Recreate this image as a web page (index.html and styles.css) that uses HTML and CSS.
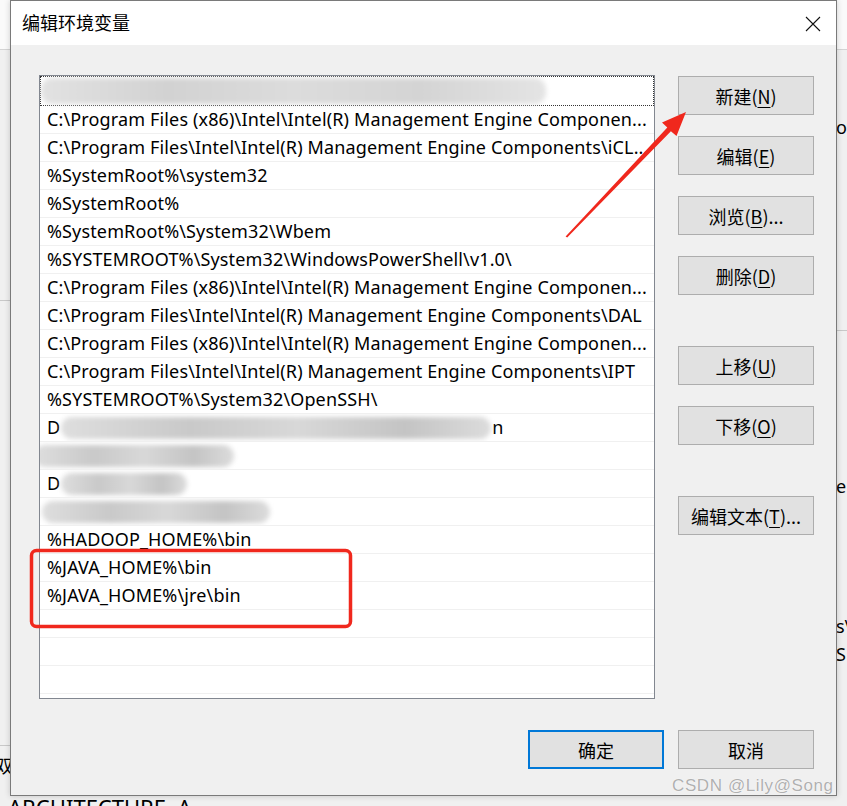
FILE: index.html
```html
<!DOCTYPE html>
<html lang="zh-CN">
<head>
<meta charset="utf-8">
<title>编辑环境变量</title>
<link rel="stylesheet" href="styles.css">
</head>
<body>
<div class="desktop">
  <div class="backwin">
    <div class="bw-top"></div>
    <span class="bw-text bw-of">of</span>
    <span class="bw-text bw-er">er</span>
    <span class="bw-text bw-s">s\</span>
    <span class="bw-text bw-se">SE</span>
    <span class="bw-text bw-qu">双</span>
    <span class="bw-text bw-arch">ARCHITECTURE&nbsp;&nbsp;A</span>
    <div class="bw-line bw-l1"></div>
    <div class="bw-line bw-l2"></div>
    <div class="bw-line bw-l3"></div>
  </div>

  <div class="dialog">
    <div class="titlebar">
      <span class="title">编辑环境变量</span>
      <svg class="close" width="16" height="16" viewBox="0 0 16 16"><path d="M1 1 L15 15 M15 1 L1 15" stroke="#111" stroke-width="1.1" fill="none"/></svg>
    </div>
    <div class="content">
      <div class="main">
        <div class="list">
          <div class="row focus"><span class="blur b1"></span></div>
          <div class="row">C:\Program Files (x86)\Intel\Intel(R) Management Engine Componen...</div>
          <div class="row">C:\Program Files\Intel\Intel(R) Management Engine Components\iCL...</div>
          <div class="row">%SystemRoot%\system32</div>
          <div class="row">%SystemRoot%</div>
          <div class="row">%SystemRoot%\System32\Wbem</div>
          <div class="row">%SYSTEMROOT%\System32\WindowsPowerShell\v1.0\</div>
          <div class="row">C:\Program Files (x86)\Intel\Intel(R) Management Engine Componen...</div>
          <div class="row">C:\Program Files\Intel\Intel(R) Management Engine Components\DAL</div>
          <div class="row">C:\Program Files (x86)\Intel\Intel(R) Management Engine Componen...</div>
          <div class="row">C:\Program Files\Intel\Intel(R) Management Engine Components\IPT</div>
          <div class="row">%SYSTEMROOT%\System32\OpenSSH\</div>
          <div class="row">D<span class="blur b13"></span>n</div>
          <div class="row"><span class="blur b14"></span></div>
          <div class="row">D<span class="blur b15"></span></div>
          <div class="row"><span class="blur b16"></span></div>
          <div class="row">%HADOOP_HOME%\bin</div>
          <div class="row">%JAVA_HOME%\bin</div>
          <div class="row">%JAVA_HOME%\jre\bin</div>
          <div class="row"></div>
          <div class="row"></div>
          <div class="row"></div>
        </div>
        <div class="side">
          <div class="btn">新建(<u>N</u>)</div>
          <div class="btn">编辑(<u>E</u>)</div>
          <div class="btn">浏览(<u>B</u>)...</div>
          <div class="btn">删除(<u>D</u>)</div>
          <div class="btn gap">上移(<u>U</u>)</div>
          <div class="btn">下移(<u>O</u>)</div>
          <div class="btn gap">编辑文本(<u>T</u>)...</div>
        </div>
      </div>
      <div class="footer">
        <div class="btn default">确定</div>
        <div class="btn">取消</div>
      </div>
    </div>
  </div>

  <svg class="annot" width="847" height="806" viewBox="0 0 847 806">
    <rect x="31.5" y="550.5" width="319" height="76" rx="5" ry="5" fill="none" stroke="#f0281d" stroke-width="3.5"/>
    <polygon fill="#f0281d" points="565.6,236.4 667.3,127.6 662,122.5 686,112 676.5,136 670.9,131.2 567.2,237.6"/>
  </svg>

  <div class="watermark">CSDN @Lily@Song</div>
</div>
</body>
</html>
```

FILE: styles.css
```css
* { box-sizing: border-box; }
html, body { margin: 0; padding: 0; }
body {
  width: 847px;
  height: 806px;
  overflow: hidden;
  font-family: "Noto Sans", "Noto Sans CJK SC", sans-serif;
  font-size: 18px;
  color: #000;
  background: #f0f0f0;
}
.desktop {
  position: relative;
  width: 847px;
  height: 806px;
  overflow: hidden;
}
.backwin {
  position: absolute;
  inset: 0;
  background: #f0f0f0;
}
.bw-top {
  position: absolute;
  left: 0; top: 0; right: 0;
  height: 50px;
  background: #fafafa;
  border-bottom: 1px solid #d4d4d4;
}
.bw-text {
  position: absolute;
  font-size: 18px;
  white-space: nowrap;
}
.bw-of { left: 836px; top: 115px; }
.bw-er { left: 836px; top: 474px; }
.bw-s { left: 836px; top: 614px; }
.bw-se { left: 836px; top: 642px; }
.bw-qu { left: -5px; top: 752px; font-family: "Noto Sans CJK SC", sans-serif; }
.bw-arch { left: 8px; top: 792px; font-size: 22px; }
.bw-line {
  position: absolute;
  height: 1px;
  background: #c8c8c8;
}
.bw-l1 { left: 0; width: 12px; top: 300px; }
.bw-l2 { left: 0; width: 12px; top: 745px; }
.bw-l3 { left: 836px; width: 11px; top: 330px; }

.dialog {
  position: absolute;
  left: 10px;
  top: 0;
  width: 827px;
  height: 796px;
  border: 1px solid #7a7a7a;
  background: #f0f0f0;
  display: flex;
  flex-direction: column;
  box-shadow: 0 0 6px rgba(0,0,0,0.18);
}
.titlebar {
  height: 44px;
  background: #fff;
  display: flex;
  align-items: center;
  justify-content: space-between;
  padding: 0 15px 0 11px;
  flex: none;
}
.title {
  font-family: "Noto Sans CJK SC", sans-serif;
  font-size: 18px;
  position: relative;
  top: -1px;
}
.close { display: block; margin-top: 1px; }
.content {
  flex: 1;
  display: flex;
  flex-direction: column;
  padding: 30px 22px 0 28px;
}
.main {
  display: flex;
  gap: 23px;
}
.list {
  width: 617px;
  height: 624px;
  background: #fff;
  border: 1px solid #828790;
  overflow: hidden;
}
.row {
  height: 28px;
  border-bottom: 1px solid #f0f0f0;
  padding-left: 7px;
  line-height: 27px;
  white-space: nowrap;
  overflow: hidden;
  display: flex;
  align-items: center;
  letter-spacing: 0.14px;
}
.row.focus {
  border: 1px dotted #333;
  height: 30px;
  position: relative;
  padding-left: 6px;
  overflow: visible;
}
.blur {
  display: inline-block;
  height: 22px;
  border-radius: 11px;
  background: linear-gradient(90deg, #dedede, #c9c9c9 30%, #d8d8d8 55%, #c4c4c4 80%, #dcdcdc);
  filter: blur(2.5px);
}
.b1 { width: 505px; margin-left: -6px; height: 26px; background: linear-gradient(90deg, #e2e2e2, #d2d2d2 25%, #dcdcdc 50%, #d4d4d4 75%, #e4e4e4); }
.b13 { width: 430px; margin-left: 1px; margin-right: 1px; }
.b14 { width: 200px; margin-left: -13px; }
.b15 { width: 126px; margin-left: 1px; }
.b16 { width: 228px; margin-left: -5px; }

.side {
  display: flex;
  flex-direction: column;
  gap: 21px;
  padding-top: 1px;
}
.btn {
  width: 136px;
  height: 39px;
  background: #e1e1e1;
  border: 1px solid #adadad;
  display: flex;
  align-items: center;
  justify-content: center;
  font-family: "Noto Sans CJK SC", sans-serif;
  font-size: 18px;
  white-space: nowrap;
}
.btn u { text-decoration-thickness: 1px; text-underline-offset: 3px; }
.btn.gap { margin-top: 30px; }
.btn.default { border: 2px solid #0078d7; }
.footer {
  display: flex;
  justify-content: flex-end;
  gap: 14px;
  margin-top: 31px;
}
.annot {
  position: absolute;
  left: 0; top: 0;
  pointer-events: none;
}
.watermark {
  position: absolute;
  left: 672px;
  top: 776px;
  font-family: "Liberation Sans", sans-serif;
  font-size: 17px;
  letter-spacing: 0.6px;
  color: #b0b0b0;
  text-shadow: 0 0 1px #fff, 0 0 1px #fff;
}
```
